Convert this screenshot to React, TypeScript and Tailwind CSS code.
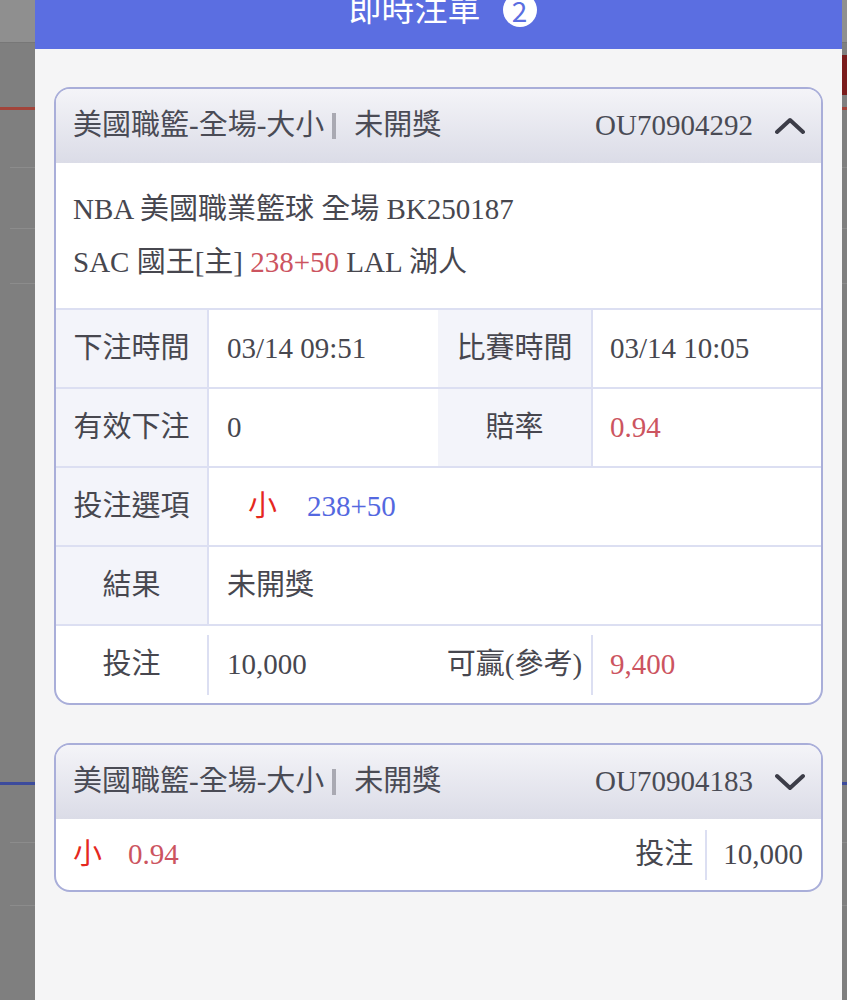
const FONT = "font-['Liberation_Serif','Noto_Sans_CJK_TC',serif]";
const CJK = "font-['Noto_Sans_CJK_TC','Noto_Sans',sans-serif]";

function Chevron({ up }: { up?: boolean }) {
  return (
    <svg width="30" height="18" viewBox="0 0 30 18" fill="none" stroke="#3c3d48" strokeWidth="4" strokeLinecap="round" strokeLinejoin="round">
      {up ? <path d="M2 15 L15 3 L28 15" /> : <path d="M2 3 L15 15 L28 3" />}
    </svg>
  );
}

function CardHeader({ id, open }: { id: string; open?: boolean }) {
  return (
    <div className="flex h-[74px] items-center bg-gradient-to-b from-[#f4f4f8] to-[#dbdce7] pl-[17px] pr-[16px] text-[#4a4b55]">
      <span>美國職籃-全場-大小</span>
      <span className="ml-[8px] mr-[18px] h-[26px] w-[4px] bg-[#a9a9b2]" />
      <span>未開獎</span>
      <span className="ml-auto mr-[22px]">{id}</span>
      <Chevron up={open} />
    </div>
  );
}

const labelCls = "flex items-center justify-center bg-[#f3f4fa]";

export default function App() {
  return (
    <div className={`relative h-[1000px] w-[847px] overflow-hidden bg-[#7f7f7f] ${FONT} text-[29px] text-[#47474f]`}>
      {/* Dimmed page behind the sheet */}
      <div className="flex flex-col">
        <div className="h-[43px] border-b border-[#777] bg-[#8f8f8f]" />
        <div className="flex h-[64px] justify-end">
          <div className="mt-[12px] h-[40px] w-[5px] bg-[#7a1c1c]" />
        </div>
        <div className="h-[3px] bg-[#a2443a]" />
        <div className="h-[57px]" />
        <div className="ml-[10px] h-px bg-[#8c8c8c]" />
        <div className="h-[60px]" />
        <div className="ml-[10px] h-px bg-[#8c8c8c]" />
        <div className="h-[54px]" />
        <div className="ml-[10px] h-px bg-[#8c8c8c]" />
        <div className="h-[498px]" />
        <div className="h-[3px] bg-[#3c4b9c]" />
        <div className="h-[57px]" />
        <div className="ml-[10px] h-px bg-[#8c8c8c]" />
        <div className="h-[62px]" />
        <div className="ml-[10px] h-px bg-[#8c8c8c]" />
      </div>

      {/* Sheet */}
      <div className="absolute inset-y-0 left-[35px] right-[5px] flex flex-col bg-[#f5f5f6]">
        <div className="flex h-[49px] justify-center overflow-hidden bg-[#5b6ee1]">
          <div className="-mt-[13px] ml-[8px] flex h-[40px] items-center gap-[22px]">
            <span className={`${CJK} text-[33px] leading-[36px] text-white`}>即時注單</span>
            <span className={`mt-[6px] flex h-[34px] w-[34px] shrink-0 items-center justify-center rounded-full bg-white ${CJK} text-[28px] leading-none text-[#5b6ee1]`}>
              2
            </span>
          </div>
        </div>

        <div className="flex flex-col gap-[38px] px-[19px] pt-[38px]">
          {/* Open bet */}
          <div className="overflow-hidden rounded-[16px] border-2 border-[#a9aed9] bg-white">
            <CardHeader id="OU70904292" open />
            <div className="px-[17px] pb-[19px] pt-[20px] leading-[53px]">
              <div>NBA 美國職業籃球 全場 BK250187</div>
              <div>
                SAC 國王[主] <span className="text-[#cc5460]">238+50</span> LAL 湖人
              </div>
            </div>
            <div className="border-t-2 border-[#dcdff2]">
              <div className="flex h-[79px] border-b-2 border-[#dcdff2]">
                <div className={`w-[153px] border-r-2 border-[#dcdff2] ${labelCls}`}>下注時間</div>
                <div className="flex w-[229px] items-center pl-[18px]">03/14 09:51</div>
                <div className={`w-[155px] border-r-2 border-[#dcdff2] ${labelCls}`}>比賽時間</div>
                <div className="flex flex-1 items-center pl-[17px]">03/14 10:05</div>
              </div>
              <div className="flex h-[79px] border-b-2 border-[#dcdff2]">
                <div className={`w-[153px] border-r-2 border-[#dcdff2] ${labelCls}`}>有效下注</div>
                <div className="flex w-[229px] items-center pl-[18px]">0</div>
                <div className={`w-[155px] border-r-2 border-[#dcdff2] ${labelCls}`}>賠率</div>
                <div className="flex flex-1 items-center pl-[17px] text-[#cc5460]">0.94</div>
              </div>
              <div className="flex h-[79px] border-b-2 border-[#dcdff2]">
                <div className={`w-[153px] border-r-2 border-[#dcdff2] ${labelCls}`}>投注選項</div>
                <div className="flex flex-1 items-center pl-[39px]">
                  <span className="text-[#e5281e]">小</span>
                  <span className="ml-[30px] text-[#5468e0]">238+50</span>
                </div>
              </div>
              <div className="flex h-[79px] border-b-2 border-[#dcdff2]">
                <div className={`w-[153px] border-r-2 border-[#dcdff2] ${labelCls}`}>結果</div>
                <div className="flex flex-1 items-center pl-[18px]">未開獎</div>
              </div>
              <div className="flex h-[77px] items-center">
                <div className="flex w-[151px] justify-center">投注</div>
                <div className="h-[60px] w-[2px] bg-[#dcdff2]" />
                <div className="w-[229px] pl-[18px]">10,000</div>
                <div className="flex w-[153px] justify-center">可贏(參考)</div>
                <div className="h-[60px] w-[2px] bg-[#dcdff2]" />
                <div className="flex-1 pl-[17px] text-[#cc5460]">9,400</div>
              </div>
            </div>
          </div>

          {/* Collapsed bet */}
          <div className="overflow-hidden rounded-[16px] border-2 border-[#a9aed9] bg-white">
            <CardHeader id="OU70904183" />
            <div className="flex h-[71px] items-center pl-[17px] pr-[18px]">
              <span className="text-[#e5281e]">小</span>
              <span className="ml-[26px] text-[#cc5460]">0.94</span>
              <span className="ml-auto">投注</span>
              <span className="ml-[12px] mr-[16px] h-[50px] w-[2px] bg-[#dcdff2]" />
              <span>10,000</span>
            </div>
          </div>
        </div>
      </div>
    </div>
  );
}
